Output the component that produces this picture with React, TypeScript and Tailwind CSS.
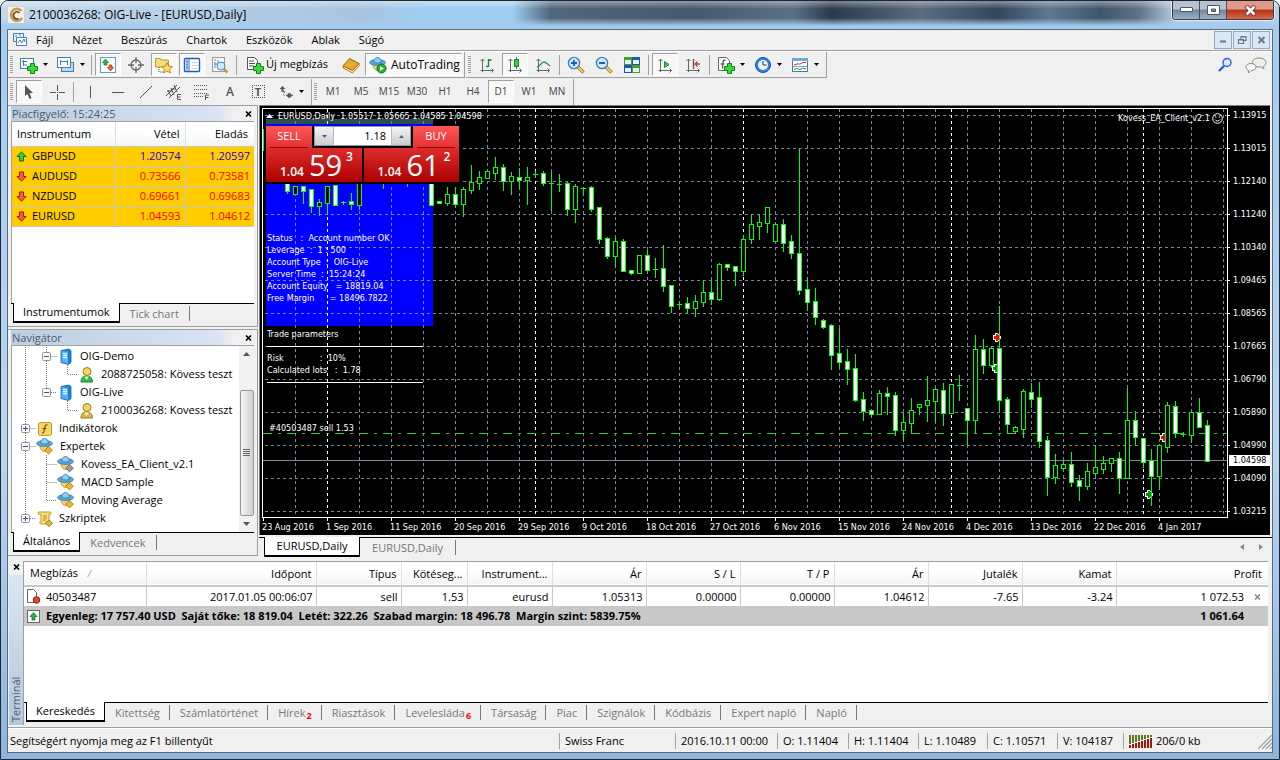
import React from "react";
import type { ReactNode } from "react";

/* ---------- small helpers ---------- */

function Icon({ children, w = 18, h = 18 }: { children: ReactNode; w?: number; h?: number }) {
  return (
    <svg width={w} height={h} viewBox={`0 0 ${w} ${h}`} fill="none" aria-hidden="true" className="shrink-0">
      {children}
    </svg>
  );
}

function Caret() {
  return (
    <Icon w={5} h={3}>
      <path d="M0 0h5L2.5 3z" fill="#000" />
    </Icon>
  );
}

function Grip() {
  return <span className="mx-[2px] h-[18px] w-[3px] shrink-0 bg-[repeating-linear-gradient(#a0a0a0_0_1px,transparent_1px_2px)]" />;
}

function Divider() {
  return <span className="mx-[2px] h-[20px] w-px shrink-0 bg-[#a0a0a0]" />;
}

function Tool({ label, pressed = false, children }: { label: string; pressed?: boolean; children: ReactNode }) {
  return (
    <button
      type="button"
      aria-label={label}
      aria-pressed={pressed}
      className={
        pressed
          ? "mx-px flex h-[23px] w-[26px] shrink-0 items-center justify-center border border-t-[#a0a0a0] border-r-white border-b-white border-l-[#a0a0a0] bg-[#f8f8f8]"
          : "mx-px flex h-[23px] w-[26px] shrink-0 items-center justify-center"
      }
    >
      {children}
    </button>
  );
}

function MenuTool({ label, children }: { label: string; children: ReactNode }) {
  return (
    <button type="button" aria-label={label} className="flex h-[23px] w-[37px] shrink-0 items-center justify-center gap-[5px]">
      {children}
      <Caret />
    </button>
  );
}

function CloseX({ color = "#000" }: { color?: string }) {
  return (
    <Icon w={7} h={6}>
      <path d="M1 0.5l5 5M6 0.5l-5 5" stroke={color} strokeWidth="1.6" />
    </Icon>
  );
}

/* ---------- icons ---------- */

const Axes = () => <path d="M4.5 3v13M2.5 14.5h13M2.5 5l2-2 2 2M13.5 12.5l2 2-2 2" stroke="#666" />;
const Plus = () => <path d="M10.5 7.500h4v3h3v4h-3v3h-4v-3h-3v-4h3z" fill="#3bd83b" stroke="#0a8a0a" />;

function Hat({ badge = "#e8b830", edge = "#a37a10" }: { badge?: string; edge?: string }) {
  return (
    <>
      <path d="M4 8c0 4 2 6.500 4.500 6.500S13 12 13 8z" fill="#f2d06a" stroke="#b98a1c" strokeWidth=".8" />
      <ellipse cx="8.500" cy="6.500" rx="8" ry="2.900" fill="#5aa9dc" stroke="#2b74a8" strokeWidth=".8" />
      <path d="M4.500 6C5 3 6.500 1.500 8.500 1.500S12 3 12.500 6c-2 1.300-6 1.300-8 0z" fill="#8fd0f2" stroke="#2b74a8" strokeWidth=".8" />
      <path d="M12.500 9.500l3.800 3.700-3.800 3.700-3.800-3.700z" fill={badge} stroke={edge} strokeWidth=".9" />
    </>
  );
}

function Magnifier({ sign }: { sign: ReactNode }) {
  return (
    <Icon>
      <path d="M11 11l5.500 5.500" stroke="#a37a10" strokeWidth="3.400" />
      <path d="M11 11l5 5" stroke="#f2cf55" strokeWidth="1.800" />
      <circle cx="7" cy="7" r="5.600" fill="#cfe9fb" stroke="#3c7fc4" strokeWidth="1.400" />
      <g stroke="#1f5fae" strokeWidth="1.800">{sign}</g>
    </Icon>
  );
}

function Server() {
  return (
    <Icon w={17} h={17}>
      <path d="M4 2.500L12 1l2 1.500v12L11.500 16.500 4 14.500z" fill="#1f7fd8" stroke="#1763ac" strokeWidth=".8" />
      <path d="M4.500 3l6.500.800v12L4.500 14z" fill="#4fb4fa" />
      <path d="M6 5.500l4 .4M6 7.500l4 .4M6 9.500l4 .4" stroke="#fff" strokeWidth="1.100" />
    </Icon>
  );
}

function Person({ fill, edge }: { fill: string; edge: string }) {
  return (
    <Icon w={17} h={17}>
      <path d="M3 16c0-4 2-6 5.500-6s6 2 6 6z" fill={fill} stroke={edge} />
      <circle cx="9" cy="5.500" r="4" fill="#f3d562" stroke="#9c7a14" />
      <path d="M6.500 10.500l2 3.500 2.500-3.500" fill="#fff8d0" />
    </Icon>
  );
}

function ArrowMark({ up }: { up: boolean }) {
  return (
    <Icon w={11} h={11}>
      {up ? (
        <path d="M5.500 .8L10 5.500H7.500V10h-4V5.500H1z" fill="#2fd04a" stroke="#0b6b1c" />
      ) : (
        <path d="M5.500 10.200L1 5.500h2.500V1h4v4.500H10z" fill="#f0603c" stroke="#9c1c0c" />
      )}
    </Icon>
  );
}

/* ---------- title bar, menu, toolbars ---------- */

function TitleBar() {
  return (
    <header className="flex h-[28px] shrink-0 items-start bg-[linear-gradient(to_bottom,rgba(255,255,255,.35)_0_1px,transparent_8px_17px,#a4cbee_25px),linear-gradient(to_right,#c6d8e8_0,#b4cfe8_15%,#a9c4de_28%,#9ecdf0_33%,#9ecdf0_40%,#51667c_43%,#46586c_54%,#5a7086_62%,#2b3a4a_65%,#5b6c7f_72%,#33465c_78%,#5f7790_82%,#3f556b_86%,#5d7186_89%,#b9cfe4_92%)] pl-[7px]">
      <div className="flex h-[28px] flex-1 items-center gap-[5px]">
        <Icon w={16} h={16}>
          <rect width="16" height="16" fill="#f6efe4" />
          <path d="M13.500 4A6 6 0 1 0 14 11" stroke="#c69a5c" strokeWidth="2.600" />
          <path d="M11.500 6a3.500 3.500 0 1 0-1 5.500" stroke="#6b4620" strokeWidth="1.600" />
        </Icon>
        <h1 className="text-[12px] leading-4 text-black">2100036268: OIG-Live - [EURUSD,Daily]</h1>
      </div>
      <div className="mr-[5px] flex h-[19px] overflow-hidden rounded-b border border-t-0 border-[#30404f] shadow-[0_0_0_1px_rgba(255,255,255,.6)]">
        <button type="button" aria-label="Kis méret" className="flex w-[27px] items-center justify-center border-r border-[#41515f] bg-[linear-gradient(#b7c4d0_0_45%,#71859a_50%,#9db3c6)]">
          <Icon w={13} h={6}>
            <rect x=".5" y=".5" width="12" height="4" rx=".5" fill="#fff" stroke="#4a5866" />
          </Icon>
        </button>
        <button type="button" aria-label="Teljes méret" className="flex w-[27px] items-center justify-center border-r border-[#41515f] bg-[linear-gradient(#b7c4d0_0_45%,#71859a_50%,#9db3c6)]">
          <Icon w={13} h={11}>
            <path d="M.5.500h12v9H.5zM4.500 4v2.500h4V4z" fill="#fff" fillRule="evenodd" stroke="#4a5866" />
          </Icon>
        </button>
        <button type="button" aria-label="Bezárás" className="flex w-[46px] items-center justify-center bg-[linear-gradient(#e09a8a_0_45%,#b83018_50%,#d9684a)]">
          <Icon w={13} h={11}>
            <path d="M2 1l9 9M11 1l-9 9" stroke="#5a3030" strokeWidth="4.200" />
            <path d="M2.500 1.500l8 8M10.500 1.500l-8 8" stroke="#fff" strokeWidth="2.600" />
          </Icon>
        </button>
      </div>
    </header>
  );
}

const MENU = ["Fájl", "Nézet", "Beszúrás", "Chartok", "Eszközök", "Ablak", "Súgó"];

function MenuBar() {
  return (
    <nav className="flex h-[21px] shrink-0 items-center border-b border-[#a0a0a0] bg-[#f0f0f0] pl-1">
      <Icon w={16} h={16}>
        <path d="M1.500 1.500h10v8h-10z" fill="#e8f2fd" stroke="#3f7fc9" />
        <path d="M4.500 5.500h10v8h-10z" fill="#fff" stroke="#3f7fc9" />
        <path d="M6 11l2-3 2 3 2-4 1 3M3 4h2M7 3h2" stroke="#3f7fc9" />
      </Icon>
      <ul className="ml-2 flex flex-1 gap-[19px] text-[11px]">
        {MENU.map((m) => (
          <li key={m}>
            <button type="button">{m}</button>
          </li>
        ))}
      </ul>
      <div className="mr-[2px] flex gap-px">
        {[
          <path key="a" d="M5 9.500h6" stroke="#61788f" strokeWidth="2" />,
          <path key="b" d="M7 7V4.500h5v4h-2M4.500 7.500h5v4h-5zM7 5h5M4.500 8h5" stroke="#61788f" strokeWidth="1.200" />,
          <path key="c" d="M5.500 5l6 6M11.500 5l-6 6" stroke="#61788f" strokeWidth="2" />,
        ].map((g, i) => (
          <button key={i} type="button" aria-label={["Ablak kis mérete", "Ablak visszaállítása", "Ablak bezárása"][i]} className="flex h-[18px] w-[18px] items-center justify-center border border-[#93a9bd] bg-[#dbe8f4]">
            <Icon w={16} h={16}>{g}</Icon>
          </button>
        ))}
      </div>
    </nav>
  );
}

function MainToolbar() {
  return (
    <div className="flex h-[27px] shrink-0 items-center border-t border-white bg-[#f0f0f0]">
      <div className="flex h-[26px] items-center border-r border-b border-[#a0a0a0] pr-[2px]">
        <Grip />
        <MenuTool label="Új chart">
          <Icon>
            <rect x=".5" y="2.500" width="13" height="10" fill="#fff" stroke="#3f7fb5" />
            <path d="M3.500 4v6M2 5.500h5M4 9h3" stroke="#3f7fb5" />
            <Plus />
          </Icon>
        </MenuTool>
        <MenuTool label="Profilok">
          <Icon>
            <rect x="4.500" y="6.500" width="12" height="9" fill="#b8d8f0" stroke="#3f7fb5" />
            <rect x=".5" y="1.500" width="13" height="10" fill="#fff" stroke="#3f7fb5" />
            <path d="M3.500 4v5M3 5.500h8M10.500 4v5" stroke="#3f7fb5" />
          </Icon>
        </MenuTool>
        <Divider />
        <Tool label="Piacfigyelő" pressed>
          <Icon>
            <rect x="1.500" y="1.500" width="15" height="15" fill="#fff" stroke="#5b9bd0" />
            <path d="M6.500 3l3 3.500H8V9H5V6.500H3.500z" fill="#35b54a" stroke="#14702a" strokeWidth=".7" />
            <path d="M11.500 15l-3-3.500H10V9h3v2.500h1.500z" fill="#f0603c" stroke="#a03010" strokeWidth=".7" />
          </Icon>
        </Tool>
        <Tool label="Adatablak">
          <Icon>
            <circle cx="9" cy="9" r="5" stroke="#666" strokeWidth="1.300" />
            <path d="M9 1v6M9 11v6M1 9h6M11 9h6" stroke="#666" strokeWidth="1.300" />
          </Icon>
        </Tool>
        <Tool label="Navigátor" pressed>
          <Icon>
            <path d="M.5 2.500h5l1 1.500h7v7H.5z" fill="#f7dc7a" stroke="#c49a2a" />
            <path d="M4 11v5h4" stroke="#555" strokeDasharray="1 1" />
            <path d="M12 6.500l1.700 3.700 3.800.4-2.800 2.600.8 3.800-3.500-2-3.500 2 .8-3.800L6.500 10.600l3.800-.4z" fill="#ffd95a" stroke="#b07a10" strokeWidth=".8" />
          </Icon>
        </Tool>
        <Tool label="Terminál" pressed>
          <Icon>
            <rect x="1.500" y="2.500" width="15" height="13" rx="1" fill="#fff" stroke="#1e5fb0" strokeWidth="1.400" />
            <path d="M3 3h4v12H3z" fill="#8fb8e8" />
            <path d="M9 6.500h6M9 9.500h6M9 12.500h6" stroke="#c8d4e0" />
            <path d="M3.500 5.500h1M3.500 8.500h1M3.500 11.500h1" stroke="#1e5fb0" />
          </Icon>
        </Tool>
        <Tool label="Stratégiateszter">
          <Icon>
            <rect x="1.500" y="1.500" width="12" height="14" fill="#fafafa" stroke="#999" />
            <path d="M4 12V6M7 10V4M10 12V7M3 4h2M3 8h3" stroke="#5b8fc0" />
            <path d="M13 13l3.500 3.500" stroke="#c79a2a" strokeWidth="2.600" />
            <circle cx="10" cy="10" r="4" fill="#cfe6fa" fillOpacity=".85" stroke="#4a86c4" />
          </Icon>
        </Tool>
        <Divider />
        <button type="button" className="flex h-[23px] w-[98px] items-center justify-start gap-[2px] pl-[7px] text-[11px] whitespace-nowrap">
          <Icon>
            <path d="M1.500 1.500h7l3 3v9h-10z" fill="#fff" stroke="#555" />
            <path d="M3 5h5M3 7.500h6M3 10h5" stroke="#555" />
            <Plus />
          </Icon>
          Új megbízás
        </button>
        <Tool label="MetaEditor">
          <Icon>
            <path d="M1 10L7.500 2.500 17 7.500 10.500 14.500z" fill="#e3ac35" stroke="#94640e" />
            <path d="M1 10l9.500 4.500L17 7.500v2.500l-6.500 7L1 12z" fill="#f9e3a0" stroke="#94640e" strokeWidth=".8" />
          </Icon>
        </Tool>
        <button type="button" aria-pressed="true" className="flex h-[23px] w-[97px] items-center gap-[4px] border border-t-[#a0a0a0] border-r-white border-b-white border-l-[#a0a0a0] bg-[#f8f8f8] pl-[3px] text-[12px]">
          <Icon>
            <Hat badge="none" edge="none" />
            <circle cx="12.500" cy="12.500" r="4.500" fill="#22b13c" stroke="#0d6f20" />
            <path d="M11 10.200l4 2.300-4 2.300z" fill="#fff" />
          </Icon>
          AutoTrading
        </button>
      </div>
      <div className="ml-px flex h-[26px] items-center border-r border-b border-[#a0a0a0] pr-[3px]">
        <Grip />
        <Tool label="Oszlopdiagram">
          <Icon>
            <Axes />
            <path d="M10.500 3v8M10.500 4h3M8 10.500h2.500" stroke="#1d8a2c" strokeWidth="1.400" />
          </Icon>
        </Tool>
        <Tool label="Gyertyák" pressed>
          <Icon>
            <Axes />
            <path d="M10.500 1v12" stroke="#1d8a2c" />
            <rect x="8.500" y="3.500" width="4" height="7" fill="#2fd04a" stroke="#1d8a2c" />
          </Icon>
        </Tool>
        <Tool label="Vonaldiagram">
          <Icon>
            <Axes />
            <path d="M3 11c3 0 4-5 7-5 2 0 3 2 6 4" stroke="#2b9a3a" strokeWidth="1.300" />
          </Icon>
        </Tool>
        <Divider />
        <Tool label="Nagyítás"><Magnifier sign={<path d="M4 7h6M7 4v6" />} /></Tool>
        <Tool label="Kicsinyítés"><Magnifier sign={<path d="M4 7h6" />} /></Tool>
        <Tool label="Ablakok rendezése">
          <Icon>
            <path d="M1 1h8v8H1zM9 9h8v8H9z" fill="#4aa01e" />
            <path d="M9 1h8v8H9zM1 9h8v8H1z" fill="#1f55b8" />
            <path d="M2 4h6v4H2zM10 4h6v4h-6zM2 12h6v4H2zM10 12h6v4h-6z" fill="#e6f1fb" />
          </Icon>
        </Tool>
        <Divider />
        <Tool label="Automatikus görgetés" pressed>
          <Icon>
            <Axes />
            <path d="M8.500 5.500l4.500 3-4.500 3z" fill="#35d04a" stroke="#1d8a2c" />
          </Icon>
        </Tool>
        <Tool label="Chart eltolása">
          <Icon>
            <Axes />
            <path d="M9.500 3v10" stroke="#555" strokeWidth="1.300" />
            <path d="M16 8h-4M13.500 5.500L11 8l2.500 2.500" stroke="#c0392b" strokeWidth="1.300" />
          </Icon>
        </Tool>
        <Divider />
        <MenuTool label="Indikátorok">
          <Icon>
            <path d="M1.500 1.500h8l3 3v10h-11z" fill="#fff" stroke="#666" />
            <path d="M8.500 4.500c-3-1.500-2.500 2-3 8M3.500 8h4" stroke="#444" strokeWidth="1.200" />
            <Plus />
          </Icon>
        </MenuTool>
        <MenuTool label="Időtávok">
          <Icon>
            <circle cx="9" cy="9" r="7.500" fill="#2f86dc" stroke="#12509a" />
            <circle cx="9" cy="9" r="5" fill="#eaf4fc" />
            <path d="M9 5v4h3.500" stroke="#333" />
          </Icon>
        </MenuTool>
        <MenuTool label="Sablonok">
          <Icon>
            <rect x="1.500" y="2.500" width="15" height="13" fill="#fff" stroke="#3f7fb5" />
            <path d="M1 2h16v3H1z" fill="#6fa9d8" />
            <path d="M3 9l3-1 3 0 3-1.500h3" stroke="#b03a2e" />
            <path d="M1 10.500h16" stroke="#3f7fb5" strokeWidth=".7" />
            <path d="M3 13.500l3-1 3 1 3-1.500 3 1" stroke="#2b9a3a" />
          </Icon>
        </MenuTool>
      </div>
      <div className="ml-auto flex items-center gap-[13px] pr-[5px]">
        <button type="button" aria-label="Keresés">
          <Icon w={14} h={16}>
            <circle cx="9" cy="5.500" r="4" fill="#dbeafc" stroke="#2a62d8" strokeWidth="1.400" />
            <path d="M6 9l-5 5" stroke="#2a62d8" strokeWidth="2.400" />
          </Icon>
        </button>
        <button type="button" aria-label="Üzenetek">
          <Icon w={22} h={17}>
            <path d="M14 1c4 0 7 2 7 4.500 0 1.500-1 3-2.500 3.700L19 12l-3.500-2.200C10 10.500 7.500 8 7.500 5.500S10 1 14 1z" fill="#eee" stroke="#888" />
            <path d="M6 6.500c3 0 5 1.500 5 3.500s-2 3.500-5 3.500L3.500 16 3.300 13C1.800 12.500 1 11.300 1 10c0-2 2-3.500 5-3.500z" fill="#f7f7f7" stroke="#888" />
          </Icon>
        </button>
      </div>
    </div>
  );
}

const FRAMES = ["M1", "M5", "M15", "M30", "H1", "H4", "D1", "W1", "MN"];

function LineToolbar() {
  const s = "#555";
  return (
    <div className="flex h-[27px] shrink-0 items-center bg-[#f0f0f0]">
      <div className="flex h-[26px] items-center border-r border-[#a0a0a0] pr-[2px]">
        <Grip />
        <Tool label="Kurzor" pressed>
          <Icon><path d="M5 2l8 8H9.500l2 5-2 1-2-5L5 13z" fill={s} /></Icon>
        </Tool>
        <Tool label="Célkereszt">
          <Icon><path d="M9.500 2v6M9.500 11v6M2 9.500h6M11 9.500h6M9 9.500h1" stroke={s} /></Icon>
        </Tool>
        <Divider />
        <Tool label="Függőleges vonal"><Icon><path d="M9.500 3v12" stroke={s} /></Icon></Tool>
        <Tool label="Vízszintes vonal"><Icon><path d="M3 9.500h12" stroke={s} /></Icon></Tool>
        <Tool label="Trendvonal"><Icon><path d="M3 15L15 3" stroke={s} /></Icon></Tool>
        <Tool label="Egyenközű csatorna">
          <Icon>
            <path d="M1 13L12 2M4 15L15 4M3 7l3 6M6 5l3 7M9 2l3 7M2 8h5M6 6h5" stroke={s} />
            <path d="M16 11.500h-3.500v5H16M12.500 14h3" stroke={s} />
          </Icon>
        </Tool>
        <Tool label="Fibonacci">
          <Icon>
            <path d="M1 2.500h14M1 6.500h14M1 10.500h14M1 13.500h9" stroke={s} strokeDasharray="1 1" />
            <path d="M12.500 17v-5H16M12.500 14.500h3" stroke={s} />
          </Icon>
        </Tool>
        <Tool label="Szöveg"><span className="text-[12px] font-semibold text-[#555]">A</span></Tool>
        <Tool label="Szövegcímke">
          <span className="flex h-[13px] w-[13px] items-center justify-center border border-dotted border-[#555] text-[11px] leading-3 font-bold text-[#555]">T</span>
        </Tool>
        <MenuTool label="Nyilak">
          <Icon w={16} h={14}>
            <path d="M4.500 1l3 3-2 0v2l2 1-1 1-2-1.500L3.500 7V4h-2z" fill={s} />
            <path d="M11 13l-3-3h2V8.500h2.500V10h2.500zM5 9l2 2" fill={s} stroke={s} strokeWidth=".6" />
          </Icon>
        </MenuTool>
      </div>
      <div className="flex h-[26px] items-center border-r border-[#a0a0a0] pr-[2px]">
        <Grip />
        {FRAMES.map((f) => (
          <Tool key={f} label={f} pressed={f === "D1"}>
            <span className="text-[10px] text-[#444]">{f}</span>
          </Tool>
        ))}
      </div>
    </div>
  );
}

/* ---------- left column ---------- */

function PanelTitle({ text }: { text: string }) {
  return (
    <div className="flex h-[15px] shrink-0 items-center justify-between bg-[linear-gradient(to_right,#bccde0,#d8e4f1_85%,#f0f0f0_92%)] pr-[2px] pl-px">
      <h2 className="text-[11px] leading-[14px] text-[#4a5a6c]">{text}</h2>
      <button type="button" aria-label={`${text} bezárása`}><CloseX /></button>
    </div>
  );
}

function PanelTabs({ tabs }: { tabs: string[] }) {
  return (
    <div role="tablist" className="flex h-[23px] shrink-0 items-start border-t border-black bg-[#f0f0f0] pl-[2px] text-[11px] leading-4">
      {tabs.map((t, i) =>
        i === 0 ? (
          <button key={t} type="button" role="tab" aria-selected="true" className="-mt-px h-[20px] border-x border-b-2 border-black bg-white px-[9px]">{t}</button>
        ) : (
          <button key={t} type="button" role="tab" aria-selected="false" className="mt-[2px] h-[15px] border-r border-[#777] px-[10px] leading-[15px] text-[#777]">{t}</button>
        ),
      )}
    </div>
  );
}

const QUOTES = [
  { symbol: "GBPUSD", bid: "1.20574", ask: "1.20597", up: true },
  { symbol: "AUDUSD", bid: "0.73566", ask: "0.73581", up: false },
  { symbol: "NZDUSD", bid: "0.69661", ask: "0.69683", up: false },
  { symbol: "EURUSD", bid: "1.04593", ask: "1.04612", up: false },
];

function MarketWatch() {
  return (
    <section className="flex h-[222px] shrink-0 flex-col border-t border-r border-b border-[#a0a0a0] bg-[#f0f0f0] px-[3px]">
      <PanelTitle text="Piacfigyelő: 15:24:25" />
      <div className="flex-1 border-t border-l border-[#a0a0a0] bg-white">
        <table className="w-full table-fixed border-collapse text-[11px]">
          <thead>
            <tr className="h-[24px] bg-[linear-gradient(#fff_45%,#f1f3f5)]">
              <th scope="col" className="w-[103px] border-r border-b border-r-[#dde1e6] border-b-[#c8c8c8] pl-[5px] text-left font-normal">Instrumentum</th>
              <th scope="col" className="w-[70px] border-r border-b border-r-[#dde1e6] border-b-[#c8c8c8] pr-[5px] text-right font-normal">Vétel</th>
              <th scope="col" className="border-b border-[#c8c8c8] pr-[6px] text-right font-normal">Eladás</th>
            </tr>
          </thead>
          <tbody>
            {QUOTES.map((q) => (
              <tr key={q.symbol} className={q.up ? "h-[20px] bg-[#fc0] text-[#2a00d8]" : "h-[20px] bg-[#fc0] text-[#f00]"}>
                <td className="border border-l-0 border-[#c8c8c8] p-0 text-black">
                  <span className="flex items-center gap-[5px] pl-[4px] leading-4"><ArrowMark up={q.up} />{q.symbol}</span>
                </td>
                <td className="border border-[#c8c8c8] p-0 pr-[4px] text-right leading-4">{q.bid}</td>
                <td className="border border-r-0 border-[#c8c8c8] p-0 pr-[4px] text-right leading-4">{q.ask}</td>
              </tr>
            ))}
          </tbody>
        </table>
      </div>
      <PanelTabs tabs={["Instrumentumok", "Tick chart"]} />
    </section>
  );
}

const GUIDES: Record<string, string> = {
  "|": "M10.500 0v18",
  t: "M10.500 0v18M10.500 9.500h11",
  l: "M10.500 0v9.500h11",
  "+": "M10.500 0v18M10.500 9.500h11",
  "-": "M10.500 0v18M10.500 9.500h11",
  e: "M10.500 0v9.500h11",
  x: "M10.500 0v9.500h11",
};

function Guide({ kind }: { kind: string }) {
  const box = kind === "+" || kind === "-" || kind === "e" || kind === "x";
  return (
    <Icon w={21} h={18}>
      {GUIDES[kind] && <path d={GUIDES[kind]} stroke="#808080" strokeDasharray="1 1" />}
      {box && (
        <>
          <rect x="6.500" y="5.500" width="8" height="8" rx="1" fill="#fafafa" stroke="#919191" />
          <path d={kind === "+" || kind === "e" ? "M8 9.500h5M10.500 7v5" : "M8 9.500h5"} stroke="#3454a8" />
        </>
      )}
    </Icon>
  );
}

const Func = () => (
  <Icon w={17} h={17}>
    <rect x="2.500" y="2.500" width="13" height="13" rx="2" fill="#f6d66a" stroke="#c49a20" />
    <path d="M11.500 5c-2-1-2.500 1-3 4s-1 4.500-2.500 4M6.500 8.500h4" stroke="#6b4e00" strokeWidth="1.200" />
  </Icon>
);
const Script = () => (
  <Icon w={17} h={17}>
    <path d="M3 2h11c1.500 0 1.500 2.500 0 2.500h-1V14H6c-3 0-3-2.500-1-2.500V4.500H3c-1.500 0-1.500-2.500 0-2.500z" fill="#f8dd80" stroke="#c49a20" />
    <path d="M7 6h4M7 8h4M7 10h3" stroke="#b08a20" />
    <path d="M13 10l3.500 3.300L13 16.500l-3.500-3.200z" fill="#e8b830" stroke="#a37a10" />
  </Icon>
);

const TREE: { cells: string[]; icon: ReactNode; label: string }[] = [
  { cells: ["|", "-"], icon: <Server />, label: "OIG-Demo" },
  { cells: ["|", "|", "l"], icon: <Person fill="#2fc04a" edge="#14802a" />, label: "2088725058: Kövess teszt" },
  { cells: ["|", "x"], icon: <Server />, label: "OIG-Live" },
  { cells: ["|", " ", "l"], icon: <Person fill="#e0b93c" edge="#94741c" />, label: "2100036268: Kovess teszt" },
  { cells: ["+"], icon: <Func />, label: "Indikátorok" },
  { cells: ["-"], icon: <Icon><Hat /></Icon>, label: "Expertek" },
  { cells: ["|", "t"], icon: <Icon><Hat badge="#9a9a9a" edge="#6a6a6a" /></Icon>, label: "Kovess_EA_Client_v2.1" },
  { cells: ["|", "t"], icon: <Icon><Hat /></Icon>, label: "MACD Sample" },
  { cells: ["|", "l"], icon: <Icon><Hat /></Icon>, label: "Moving Average" },
  { cells: ["e"], icon: <Script />, label: "Szkriptek" },
];

function Navigator() {
  return (
    <section className="mt-[2px] mb-[4px] flex min-h-0 flex-1 flex-col border-t border-r border-b border-[#a0a0a0] bg-[#f0f0f0] px-[3px]">
      <PanelTitle text="Navigátor" />
      <div className="flex min-h-0 flex-1 border-t border-l border-[#a0a0a0] bg-white">
        <ul className="min-w-0 flex-1 overflow-hidden pt-px pl-[3px] text-[11px]">
          {TREE.map((n) => (
            <li key={n.label} className="flex h-[18px] items-center whitespace-nowrap">
              {n.cells.map((c, i) => <Guide key={i} kind={c} />)}
              {n.icon}
              <span className="ml-[6px] leading-4">{n.label}</span>
            </li>
          ))}
        </ul>
        <div className="flex w-[15px] flex-col items-center justify-between bg-[#f1f1f1] py-[6px]">
          <Icon w={7} h={4}><path d="M3.500 0L7 4H0z" fill="#555" /></Icon>
          <div className="mt-[34px] mb-[6px] flex w-[14px] flex-1 items-center justify-center rounded-[2px] border border-[#979797] bg-[linear-gradient(to_right,#f5f5f5,#e2e2e4_50%,#cfcfd1)]">
            <Icon w={7} h={8}><path d="M0 .5h7M0 2.500h7M0 4.500h7M0 6.500h7" stroke="#666" /></Icon>
          </div>
          <Icon w={7} h={4}><path d="M3.500 4L0 0h7z" fill="#555" /></Icon>
        </div>
      </div>
      <PanelTabs tabs={["Általános", "Kedvencek"]} />
    </section>
  );
}

/* ---------- chart ---------- */

/* kind: f = falling, o = rising, d = doji; then high, body top, body bottom, low in plot rows */
type Candle = [number, "f" | "o" | "d", number, number, number, number];

const CANDLES: Candle[] = [
  [0, "d", 20, 41, 41, 41],
  [24, "f", 60, 60, 82, 84], [32, "o", 78, 78, 85, 85], [40, "f", 78, 78, 82, 94], [48, "f", 80, 81, 97, 103],
  [56, "o", 90, 94, 97, 106], [64, "o", 78, 78, 94, 105], [72, "f", 77, 77, 96, 96], [80, "d", 92, 93, 93, 95],
  [88, "f", 84, 93, 95, 100], [96, "o", 60, 60, 96, 100], [120, "d", 60, 70, 70, 79], [144, "d", 60, 70, 70, 77],
  [168, "f", 60, 60, 96, 96], [176, "f", 92, 93, 94, 94], [184, "o", 78, 86, 94, 96], [192, "f", 78, 86, 95, 98],
  [200, "o", 78, 81, 95, 107], [208, "o", 56, 74, 81, 84], [216, "o", 62, 69, 74, 80], [224, "o", 61, 63, 69, 69],
  [232, "o", 48, 59, 64, 70], [240, "f", 55, 59, 72, 81], [248, "o", 63, 68, 72, 85], [256, "f", 59, 69, 71, 79],
  [264, "o", 58, 69, 71, 95], [272, "d", 62, 65, 65, 68], [280, "f", 62, 65, 74, 76], [288, "d", 63, 74, 74, 101],
  [296, "d", 65, 75, 75, 82], [304, "f", 73, 75, 100, 106], [312, "o", 75, 78, 100, 113], [320, "d", 78, 79, 79, 86],
  [328, "f", 77, 79, 100, 102], [336, "f", 99, 99, 130, 134], [344, "f", 128, 130, 147, 149], [352, "o", 128, 133, 147, 157],
  [360, "f", 130, 133, 162, 162], [368, "f", 161, 162, 164, 165], [376, "o", 146, 147, 164, 164], [384, "f", 141, 147, 161, 162],
  [392, "d", 149, 160, 160, 168], [400, "f", 136, 160, 177, 182], [408, "f", 177, 177, 197, 203], [416, "d", 192, 195, 195, 199],
  [424, "f", 188, 195, 199, 203], [432, "o", 186, 193, 199, 207], [440, "o", 171, 184, 193, 197], [448, "f", 172, 184, 190, 195],
  [456, "o", 154, 156, 190, 191], [464, "f", 155, 156, 158, 161], [472, "f", 157, 158, 162, 176], [480, "o", 126, 131, 162, 166],
  [488, "o", 106, 116, 130, 134], [496, "o", 105, 114, 117, 130], [504, "o", 99, 99, 114, 123], [512, "o", 113, 116, 132, 132],
  [520, "f", 110, 116, 134, 142], [528, "f", 126, 133, 144, 149], [536, "f", 39, 145, 181, 185], [544, "f", 168, 181, 193, 201],
  [552, "f", 179, 193, 208, 215], [560, "f", 210, 212, 218, 219], [568, "f", 215, 217, 246, 260], [576, "f", 219, 245, 253, 258],
  [584, "f", 240, 253, 260, 275], [592, "f", 245, 260, 291, 292], [600, "f", 283, 291, 302, 311], [608, "f", 301, 302, 305, 307],
  [616, "o", 281, 285, 305, 305], [624, "f", 278, 285, 287, 305], [632, "f", 283, 287, 321, 326], [640, "o", 304, 314, 321, 330],
  [648, "o", 289, 302, 314, 323], [656, "o", 295, 296, 298, 305], [664, "o", 267, 292, 296, 312], [672, "o", 279, 281, 292, 313],
  [680, "f", 274, 282, 304, 316], [688, "o", 275, 276, 304, 304], [696, "d", 266, 276, 276, 291], [704, "f", 299, 300, 311, 335],
  [712, "o", 226, 241, 311, 323], [720, "f", 230, 241, 256, 264], [728, "o", 237, 240, 256, 258], [736, "f", 197, 240, 291, 301],
  [744, "f", 288, 291, 315, 324], [752, "o", 317, 319, 322, 323], [760, "o", 280, 283, 320, 328], [768, "f", 274, 284, 290, 298],
  [776, "f", 273, 289, 332, 338], [784, "f", 327, 332, 368, 386], [792, "o", 345, 357, 368, 374], [800, "o", 352, 356, 359, 361],
  [808, "f", 343, 356, 373, 377], [816, "f", 366, 372, 377, 391], [824, "o", 354, 363, 377, 380], [832, "o", 336, 359, 364, 366],
  [840, "o", 347, 355, 360, 364], [848, "o", 349, 350, 354, 362], [856, "f", 343, 350, 369, 384], [864, "o", 279, 312, 369, 369],
  [872, "f", 302, 312, 328, 335], [880, "f", 330, 330, 353, 358], [888, "f", 340, 352, 367, 396], [896, "o", 335, 337, 367, 380],
  [904, "o", 293, 297, 338, 343], [912, "f", 292, 298, 324, 328], [920, "d", 323, 325, 325, 327], [928, "o", 303, 304, 326, 333],
  [936, "f", 289, 304, 318, 318], [944, "f", 311, 317, 352, 352],
];

const H_GRID = Array.from({ length: 13 }, (_, i) => 6 + 33 * i);
const V_GRID = Array.from({ length: 30 }, (_, i) => 32 + 32 * i);
const SEPARATORS = [64, 272, 480, 688, 880];
const PRICES = ["1.13915", "1.13015", "1.12140", "1.11240", "1.10340", "1.09465", "1.08565", "1.07665", "1.06790", "1.05890", "1.04990", "1.04090", "1.03215"];
const DATES = ["23 Aug 2016", "1 Sep 2016", "11 Sep 2016", "20 Sep 2016", "29 Sep 2016", "9 Oct 2016", "18 Oct 2016", "27 Oct 2016", "6 Nov 2016", "15 Nov 2016", "24 Nov 2016", "4 Dec 2016", "13 Dec 2016", "22 Dec 2016", "4 Jan 2017"];

function TradeMark({ x, y, color }: { x: number; y: number; color: string }) {
  return (
    <path
      transform={`translate(${x} ${y})`}
      d="M-1-4h2l3 3v2l-3 3h-2v-2h-2v-4h2z"
      fill={color}
      stroke="#fff"
    />
  );
}

function Plot() {
  return (
    <svg className="absolute inset-0 h-full w-full" shapeRendering="crispEdges" fill="none" role="img" aria-label="EURUSD, Daily">
      <rect x="3" y="10" width="167" height="207" fill="#00f" />
      <rect x="3" y="10" width="167" height="5" fill="#2f4f4f" />
      <g stroke="#778899" strokeDasharray="3 3">
        {V_GRID.map((x) => <line key={x} x1={x + 0.5} x2={x + 0.5} y1="0" y2="100%" />)}
        {H_GRID.map((y) => <line key={y} x1="2" x2="100%" y1={y + 0.5} y2={y + 0.5} />)}
      </g>
      <g stroke="#fff" strokeDasharray="3 3">
        {SEPARATORS.map((x) => <line key={x} x1={x + 0.5} x2={x + 0.5} y1="0" y2="100%" />)}
      </g>
      <line x1="0" x2="100%" y1="324.500" y2="324.500" stroke="#32cd32" strokeDasharray="9 6 3 6" />
      <line x1="0" x2="100%" y1="351.500" y2="351.500" stroke="#778899" />
      <TradeMark x={733.5} y={228.5} color="#f00" />
      <TradeMark x={732.5} y={259.5} color="#0a8a1a" />
      <TradeMark x={900.5} y={328.5} color="#f00" />
      <TradeMark x={885.5} y={385.5} color="#0a8a1a" />
      <g stroke="#0f0">
        {CANDLES.map(([x, kind, high, top, bottom, low]) => (
          <g key={x}>
            <line x1={x + 0.5} x2={x + 0.5} y1={high} y2={low + 1} />
            {kind === "d" ? (
              <line x1={x - 2} x2={x + 3} y1={top + 0.5} y2={top + 0.5} />
            ) : (
              <rect x={x - 1.5} y={top - 0.5} width={4} height={Math.max(2, bottom - top + 1)} fill={kind === "f" ? "#fff" : "#000"} />
            )}
          </g>
        ))}
      </g>
    </svg>
  );
}

function OneClick() {
  return (
    <div className="w-[197px] bg-black px-[2px] pb-[2px] text-white">
      <div className="flex h-[22px] gap-[2px]">
        <div className="flex w-[46px] flex-col items-center justify-between bg-[linear-gradient(#ff5858,#e43030)] text-[11px] leading-5">
          SELL
          <span className="h-px w-[38px] bg-[#900]" />
        </div>
        <div className="flex h-[20px] flex-1 border border-[#999] bg-white">
          <button type="button" aria-label="Csökkentés" className="flex w-[19px] items-center justify-center border-r border-[#bbb] bg-[linear-gradient(#f4f4f4,#ccc)]">
            <Icon w={5} h={3}><path d="M0 0h5L2.500 3z" fill="#4060a0" /></Icon>
          </button>
          <input aria-label="Kötésegység" defaultValue="1.18" className="w-0 flex-1 pr-[5px] text-right text-[11px] leading-4 text-black outline-none" />
          <button type="button" aria-label="Növelés" className="flex w-[19px] items-center justify-center border-l border-[#bbb] bg-[linear-gradient(#f4f4f4,#ccc)]">
            <Icon w={5} h={3}><path d="M0 3h5L2.500 0z" fill="#4060a0" /></Icon>
          </button>
        </div>
        <div className="flex w-[46px] flex-col items-center justify-between bg-[linear-gradient(#ff5858,#e43030)] text-[11px] leading-5">
          BUY
          <span className="h-px w-[38px] bg-[#900]" />
        </div>
      </div>
      <div className="grid h-[34px] grid-cols-2 gap-[2px]">
        {[
          ["Eladás", "59", "3"],
          ["Vétel", "61", "2"],
        ].map(([label, big, tip]) => (
          <button key={label} type="button" aria-label={label} className="flex items-end bg-[linear-gradient(#de2c2c,#ac0000)] pl-[14px]">
            <span className="pb-[2px] text-[12px] leading-4 font-semibold">1.04</span>
            <span className="ml-[5px] pb-px text-[29px] leading-8">{big}</span>
            <span className="ml-[4px] self-start pt-px text-[12px] leading-4 font-semibold">{tip}</span>
          </button>
        ))}
      </div>
    </div>
  );
}

const STATUS_LINES = [
  "Status   :  Account number OK",
  "Leverage  :  1 : 500",
  "Account Type  :  OIG-Live",
  "Server Time  :  15:24:24",
  "Account Equity   = 18819.04",
  "Free Margin      = 18496.7822",
];

function Chart() {
  return (
    <main className="ml-px flex min-w-0 flex-1 flex-col">
      <div className="mr-[2px] mb-[2px] grid min-h-0 flex-1 grid-cols-[1fr_42px] grid-rows-[1fr_20px] border-t border-l border-[#808080] bg-black pt-[2px] pl-[2px] font-['DejaVu_Sans_Condensed','DejaVu_Sans',sans-serif] text-[9px] leading-3 text-white">
        <div className="relative overflow-hidden border border-white">
          <Plot />
          <div className="absolute top-px left-[3px] flex items-center gap-[5px] whitespace-pre">
            <Icon w={7} h={4}><path d="M3.500 0L7 4H0z" fill="#fff" /></Icon>
            <span>EURUSD,Daily  1.05517 1.05665 1.04585 1.04598</span>
          </div>
          <div className="absolute top-[3px] right-[4px] flex items-center gap-[2px]">
            Kovess_EA_Client_v2.1
            <Icon w={11} h={11}>
              <circle cx="5.500" cy="5.500" r="4.800" stroke="#fff" />
              <path d="M3 6.500c1 2 4 2 5 0M3.800 3.300v1.400M7.200 3.300v1.400" stroke="#fff" />
            </Icon>
          </div>
          <div className="absolute top-[17px] left-px font-['Open_Sans','Noto_Sans',sans-serif]"><OneClick /></div>
          <div className="absolute top-[123px] left-[4px] whitespace-pre">
            {STATUS_LINES.map((l) => <p key={l}>{l}</p>)}
          </div>
          <div className="absolute top-[219px] left-[4px] w-[156px] whitespace-pre">
            <p>Trade parameters</p>
            <div className="mt-[6px] mb-[5px] h-px bg-white" />
            <p>Risk              :  10%</p>
            <p>Calculated lots   :  1.78</p>
            <div className="mt-[6px] h-px bg-white" />
          </div>
          <p className="absolute top-[313px] left-[6px]">#40503487 sell 1.53</p>
        </div>
        <div className="relative">
          <ul className="flex flex-col gap-[19px]">
            {PRICES.map((p) => (
              <li key={p} className="flex h-[14px] items-center gap-[3px]"><span className="h-px w-[2px] bg-white" />{p}</li>
            ))}
          </ul>
          <p className="absolute top-[347px] right-0 left-px bg-white pl-[4px] leading-[11px] text-black">1.04598</p>
        </div>
        <ul className="flex overflow-hidden whitespace-nowrap">
          {DATES.map((d) => (
            <li key={d} className="w-16 shrink-0">
              <span className="ml-px block h-[3px] w-px bg-white" />
              {d}
            </li>
          ))}
        </ul>
      </div>
      <div className="flex h-[23px] shrink-0 items-start justify-between border-t border-black bg-[#f0f0f0] pr-[9px] pl-[5px] text-[11px] leading-4">
        <div role="tablist" className="flex">
          <button type="button" role="tab" aria-selected="true" className="-mt-px h-[20px] w-[96px] border-x border-b-2 border-black bg-white">EURUSD,Daily</button>
          <button type="button" role="tab" aria-selected="false" className="mt-[2px] h-[15px] w-[96px] border-r border-[#777] leading-[15px] text-[#777]">EURUSD,Daily</button>
        </div>
        <div className="mt-[6px] flex gap-[15px]">
          <Icon w={4} h={6}><path d="M4 0v6L0 3z" fill="#888" /></Icon>
          <Icon w={4} h={6}><path d="M0 0v6l4-3z" fill="#888" /></Icon>
        </div>
      </div>
    </main>
  );
}

/* ---------- terminal ---------- */

const COLS: { h: string; v: string; w: string }[] = [
  { h: "Időpont", v: "2017.01.05 00:06:07", w: "w-[170px]" },
  { h: "Típus", v: "sell", w: "w-[85px]" },
  { h: "Kötéseg...", v: "1.53", w: "w-[66px]" },
  { h: "Instrument...", v: "eurusd", w: "w-[85px]" },
  { h: "Ár", v: "1.05313", w: "w-[94px]" },
  { h: "S / L", v: "0.00000", w: "w-[94px]" },
  { h: "T / P", v: "0.00000", w: "w-[94px]" },
  { h: "Ár", v: "1.04612", w: "w-[94px]" },
  { h: "Jutalék", v: "-7.65", w: "w-[94px]" },
  { h: "Kamat", v: "-3.24", w: "w-[94px]" },
];

const TERMINAL_TABS: { t: string; n?: string }[] = [
  { t: "Kitettség" }, { t: "Számlatörténet" }, { t: "Hírek", n: "2" }, { t: "Riasztások" }, { t: "Levelesláda", n: "6" },
  { t: "Társaság" }, { t: "Piac" }, { t: "Szignálok" }, { t: "Kódbázis" }, { t: "Expert napló" }, { t: "Napló" },
];

function Terminal() {
  return (
    <section className="flex h-[168px] shrink-0 border-b border-[#a0a0a0] bg-[#f0f0f0] pt-px pr-[4px] pb-[2px]">
      <div className="ml-px flex w-[14px] shrink-0 flex-col items-center">
        <button type="button" aria-label="Terminál bezárása" className="mt-[3px] mb-[5px]"><CloseX /></button>
        <h2 className="flex w-full flex-1 rotate-180 items-center bg-[linear-gradient(to_top,#dbe6f2,#b4c8dd)] pt-[3px] text-[11px] leading-[14px] text-[#4a5a6c] [writing-mode:vertical-rl]">Terminál</h2>
      </div>
      <div className="flex min-w-0 flex-1 flex-col border-t border-l border-[#a0a0a0]">
        <div className="flex-1 bg-white">
          <table className="w-full table-fixed border-collapse text-[11px] leading-4">
            <thead>
              <tr className="h-[24px] border-b-2 border-[#c8c8c8] bg-[linear-gradient(#fff_45%,#f1f3f5)]">
                <th scope="col" className="w-[122px] border-r border-[#dde1e6] p-0 pl-[6px] text-left font-normal">
                  Megbízás <span className="ml-2 text-[9px] text-[#777]">⁄</span>
                </th>
                {COLS.map((c, i) => (
                  <th key={i} scope="col" className={`${c.w} border-r border-[#dde1e6] p-0 pr-[4px] text-right font-normal whitespace-nowrap`}>{c.h}</th>
                ))}
                <th scope="col" className="p-0 pr-[6px] text-right font-normal">Profit</th>
              </tr>
            </thead>
            <tbody>
              <tr className="h-[20px]">
                <td className="border-r border-[#c8c8c8] p-0">
                  <span className="flex items-center gap-[5px] pl-[2px]">
                    <Icon w={15} h={15}>
                      <path d="M1.500.500h6l3 3v10h-9z" fill="#fff" stroke="#666" />
                      <circle cx="10.500" cy="11" r="3.300" fill="#e8452a" stroke="#8e1c0c" />
                    </Icon>
                    40503487
                  </span>
                </td>
                {COLS.map((c, i) => (
                  <td key={i} className="border-r border-[#c8c8c8] p-0 pr-[3px] text-right whitespace-nowrap">{c.v}</td>
                ))}
                <td className="p-0">
                  <span className="flex items-center justify-end gap-[10px] pr-[7px]">
                    1 072.53
                    <button type="button" aria-label="Pozíció zárása"><CloseX color="#888" /></button>
                  </span>
                </td>
              </tr>
              <tr className="h-[20px] bg-[#c8c8c8] font-bold">
                <td colSpan={11} className="p-0">
                  <span className="flex items-center gap-[6px] pl-[3px] whitespace-pre">
                    <Icon w={13} h={13}>
                      <rect x=".5" y=".5" width="12" height="12" fill="#f6fbf6" stroke="#666" />
                      <path d="M6.500 2.500l3.500 4H8v3.500H5V6.500H3z" fill="#2fb54a" stroke="#0b6b1c" strokeWidth=".7" />
                    </Icon>
                    Egyenleg: 17 757.40 USD  Saját tőke: 18 819.04  Letét: 322.26  Szabad margin: 18 496.78  Margin szint: 5839.75%
                  </span>
                </td>
                <td className="p-0 pr-[24px] text-right">1 061.64</td>
              </tr>
            </tbody>
          </table>
        </div>
        <div role="tablist" className="flex h-[23px] shrink-0 items-start border-t border-black text-[11px] leading-4 whitespace-nowrap">
          <button type="button" role="tab" aria-selected="true" className="-mt-px ml-[2px] h-[20px] border-x border-b-2 border-black bg-white px-[9px]">Kereskedés</button>
          {TERMINAL_TABS.map(({ t, n }) => (
            <button key={t} type="button" role="tab" aria-selected="false" className="mt-[2px] h-[15px] border-r border-[#777] pr-[9px] pl-[10px] leading-[14px] text-[#777]">
              {t}
              {n && <sub className="ml-px text-[9px] font-bold text-[#f00]">{n}</sub>}
            </button>
          ))}
        </div>
      </div>
    </section>
  );
}

const STATUS: { t: string; w: string }[] = [
  { t: "Swiss Franc", w: "w-[116px]" },
  { t: "2016.10.11 00:00", w: "w-[102px]" },
  { t: "O: 1.11404", w: "w-[71px]" },
  { t: "H: 1.11404", w: "w-[70px]" },
  { t: "L: 1.10489", w: "w-[69px]" },
  { t: "C: 1.10571", w: "w-[70px]" },
  { t: "V: 104187", w: "w-[66px]" },
];

function StatusBar() {
  return (
    <footer className="flex h-[24px] shrink-0 items-center border-t border-white bg-[#f0f0f0] pt-px pl-[2px] text-[11px] leading-4 whitespace-nowrap">
      <p className="flex-1">Segítségért nyomja meg az F1 billentyűt</p>
      {STATUS.map((s) => (
        <p key={s.t} className={`${s.w} border-l border-[#a0a0a0] pl-[5px]`}>{s.t}</p>
      ))}
      <div className="flex w-[149px] items-center gap-[4px] border-l border-[#a0a0a0] pl-[5px]">
        <Icon w={23} h={14}>
          {[0, 1, 2, 3, 4, 5, 6, 7].map((i) => (
            <g key={i}>
              <rect x={i * 3} y="1" width="2" height={9 - i} fill="#5c7a1c" />
              <rect x={i * 3} y={11 - i} width="2" height={3 + i} fill="#9c1c0c" />
            </g>
          ))}
        </Icon>
        206/0 kb
        <span className="ml-auto self-end">
          <Icon w={14} h={14}><path d="M0 14L14 0M4 14L14 4M8 14l6-6M12 14l2-2" stroke="#999" strokeWidth="1.200" /></Icon>
        </span>
      </div>
    </footer>
  );
}

export default function App() {
  return (
    <div className="flex h-screen min-h-[600px] flex-col overflow-hidden rounded-t-lg border border-[#1b2733] bg-[linear-gradient(#a4cbee,#b9d6f0_60%,#8fb4dc)] font-['Open_Sans','Noto_Sans',sans-serif] text-black">
      <TitleBar />
      <div className="mx-[6px] mb-[6px] flex min-h-0 flex-1 flex-col border border-[#5a6b7a] bg-[#f0f0f0]">
        <MenuBar />
        <MainToolbar />
        <LineToolbar />
        <div className="flex min-h-0 flex-1">
          <aside className="flex w-[250px] shrink-0 flex-col">
            <MarketWatch />
            <Navigator />
          </aside>
          <Chart />
        </div>
        <Terminal />
        <StatusBar />
      </div>
    </div>
  );
}
